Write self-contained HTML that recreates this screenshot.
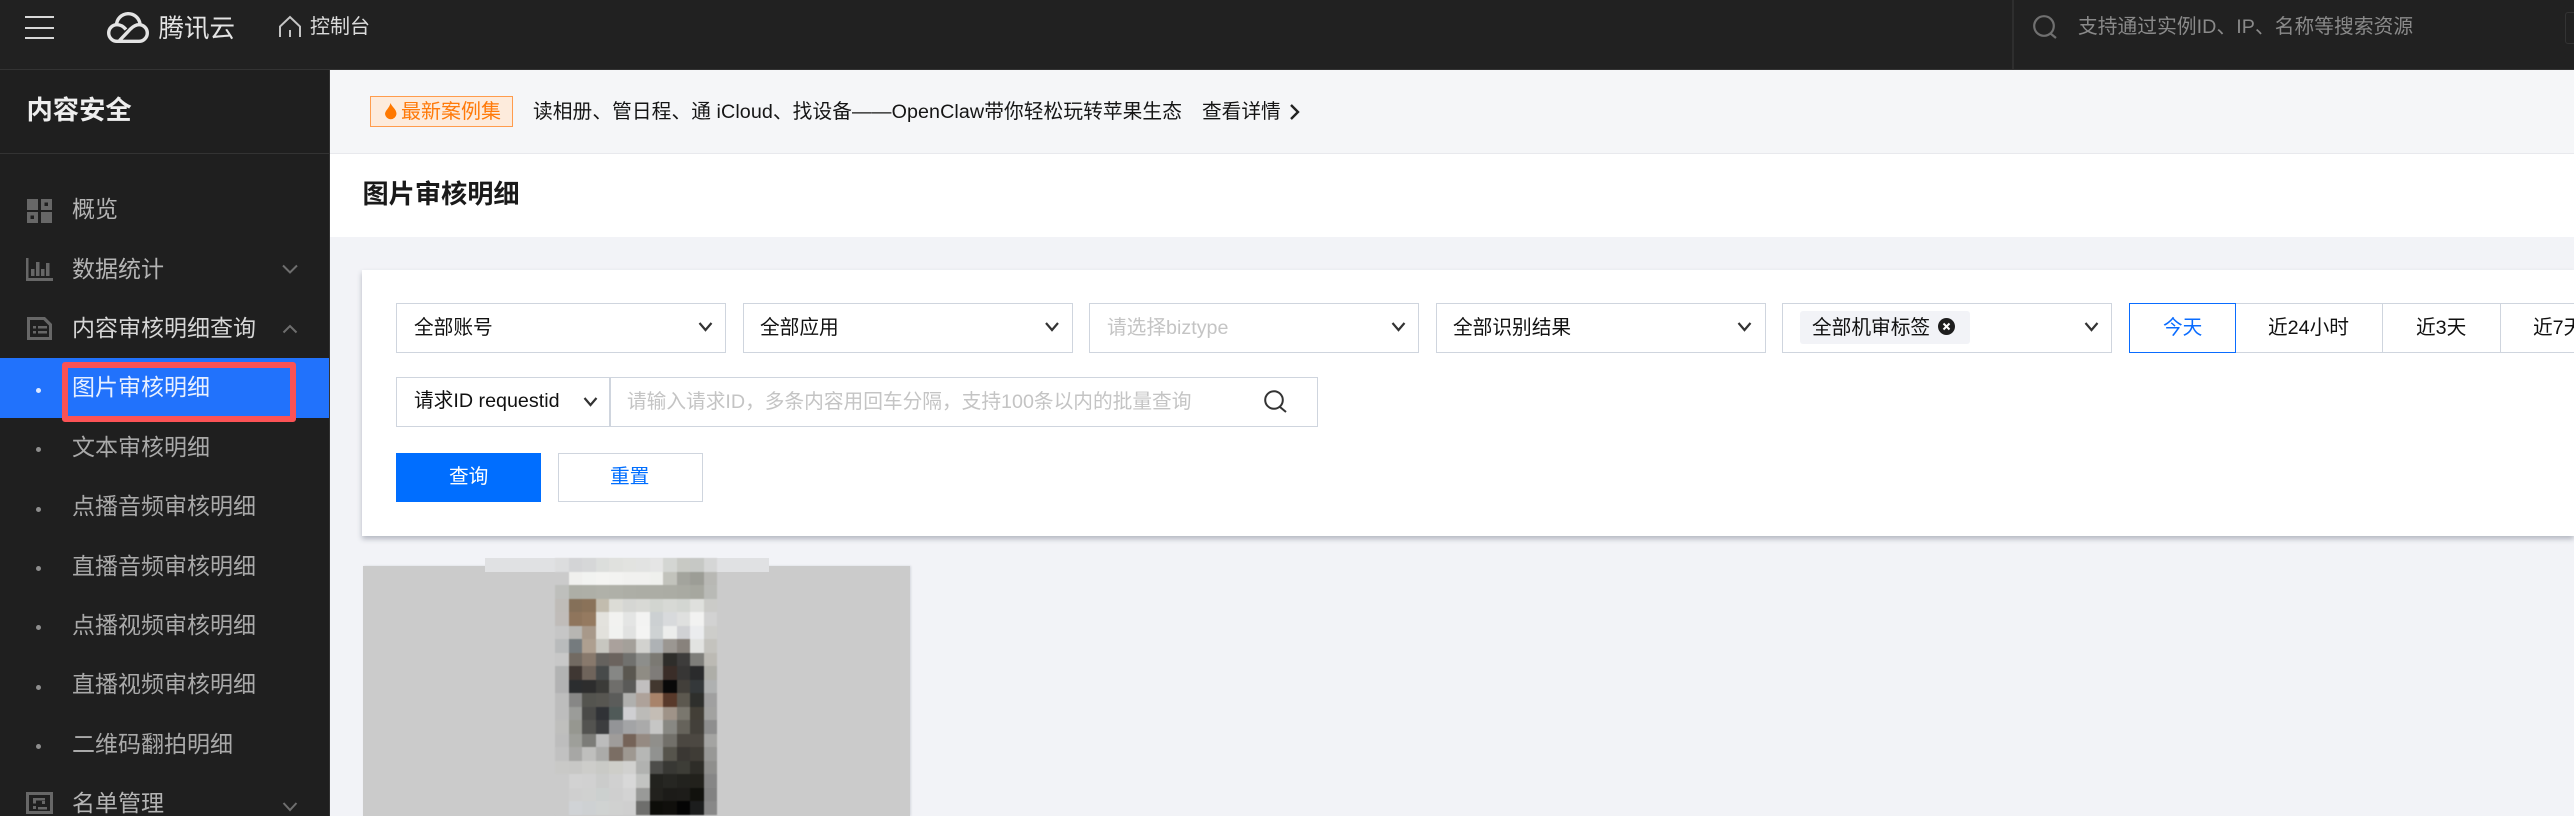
<!DOCTYPE html>
<html lang="zh-CN"><head><meta charset="utf-8"><title>图片审核明细</title>
<style>
html,body{margin:0;padding:0;width:2574px;height:816px;overflow:hidden;background:#f2f3f7}
body{position:relative;font-family:"Liberation Sans","Noto Sans CJK SC",sans-serif;color:#111}
div,span,svg{position:absolute;box-sizing:border-box}
.t{white-space:nowrap;line-height:30px;height:30px;font-size:19.7px}
.m{white-space:nowrap;line-height:30px;height:30px;font-size:23px;color:#a9a9a9;left:72px}
.box{border:1.5px solid #cfd5de;background:#fff}
.dot{left:36px;width:5px;height:5px;border-radius:50%;background:#8e8e8e}
#mos{left:555px;top:558px;width:162px;display:grid;grid-template-columns:repeat(12,13.5px);grid-auto-rows:13.5px;filter:blur(.6px)}
#mos i{display:block}
</style></head><body>

<div style="left:0;top:0;width:2574px;height:70px;background:#212121;border-bottom:1.5px solid #333"></div>
<div style="left:25px;top:16px;width:29px;height:2.4px;background:#d8d8d8"></div>
<div style="left:25px;top:26.5px;width:29px;height:2.4px;background:#d8d8d8"></div>
<div style="left:25px;top:37px;width:29px;height:2.4px;background:#d8d8d8"></div>
<svg style="left:0;top:0" width="320" height="70" fill="none" stroke="#e4e4e4" stroke-width="3.4">
<path d="M117 41.3H139A8.3 8.3 0 0 0 139 24.700C135 24.700 132.500 27 130.500 29L119.500 40.500"/>
<path d="M117 41.3A8.3 8.3 0 0 1 117 24.700C120.500 24.700 123.500 26.500 126 29.500"/>
<path d="M116.500 25A11.800 11.800 0 0 1 140 24"/>
<path d="M280 37V26.500L290 17L300 26.500V37M290 30V37" stroke="#c4c4c4" stroke-width="2"/>
</svg>
<span class="t" style="left:158.500px;top:14px;font-size:25.500px;color:#e4e4e4">腾讯云</span>
<span class="t" style="left:310px;top:12px;font-size:20px;color:#dcdcdc">控制台</span>
<div style="left:2012px;top:0;width:1.5px;height:69px;background:#2e2e2e"></div>
<svg style="left:2030px;top:12px" width="32" height="30" fill="none" stroke="#707070" stroke-width="2.2"><circle cx="14" cy="14" r="9.800"/><path d="M20.500 21.500L26 26"/></svg>
<span class="t" style="left:2078px;top:12px;font-size:19.700px;letter-spacing:.08px;color:#8a8a8a">支持通过实例ID、IP、名称等搜索资源</span>
<div style="left:2565px;top:12px;width:20px;height:32px;border:1.500px solid #333;border-radius:3px"></div>

<div style="left:0;top:70px;width:330px;height:746px;background:#1f1f1f;border-right:1.500px solid #333"></div>
<div style="left:0;top:152.500px;width:329px;height:1.500px;background:#333"></div>
<span class="t" style="left:26.500px;top:95px;font-size:26.300px;font-weight:700;color:#eee">内容安全</span>

<svg style="left:0;top:190px" width="60" height="630" fill="#676767">
<path fill-rule="evenodd" d="M27 9h11v11H27zM41 9h11v11H41zM44.500 12.500v3.500h3.500v-3.500zM27 22h11v11H27zM30.500 25.500v3.500h3.500v-3.500zM41 22h11v11H41z"/>
<path d="M26 68h2.500v20H53v3H26zM31 79h3.500v7H31zM36 72h3.500v14H36zM41 79h3.500v7H41zM46 73h3.500v13H46z"/>
<path fill-rule="evenodd" d="M27 127h18l7 7v16H27zM30 130v17h19v-11.500l-5.500-5.500zM33 136h3v2.500h-3zM38 136h9v2.500h-9zM33 141h3v2.500h-3zM38 141h9v2.500h-9z"/>
<path fill-rule="evenodd" d="M26 602h27v22H26zM29 605v16h21v-16zM33 608h12v2.500H36v3h-3zM42 611h3v3h-3zM33 616h3v3h-3zM38 617h9v2.500h-9z"/>
</svg>
<svg style="left:270px;top:250px" width="40" height="570" fill="none" stroke="#6e6e6e" stroke-width="2">
<path d="M13 15.500L20 22.500L27 15.500"/>
<path d="M13.500 82.500L20 76L26.500 82.500"/>
<path d="M13.500 553L20 560L26.500 553"/>
</svg>

<span class="m" style="top:194px;color:#b4b4b4">概览</span>
<span class="m" style="top:254px;color:#b4b4b4">数据统计</span>
<span class="m" style="top:313px;color:#d6d6d6">内容审核明细查询</span>
<div style="left:0;top:358px;width:329px;height:60px;background:#2172fc"></div>
<div style="left:62px;top:362px;width:234px;height:60px;border:6px solid #fb5255;border-radius:3px"></div>
<span class="m" style="top:372px;color:#e8f0ff">图片审核明细</span>
<span class="m" style="top:432px">文本审核明细</span>
<span class="m" style="top:491px">点播音频审核明细</span>
<span class="m" style="top:551px">直播音频审核明细</span>
<span class="m" style="top:610px">点播视频审核明细</span>
<span class="m" style="top:669px">直播视频审核明细</span>
<span class="m" style="top:729px">二维码翻拍明细</span>
<span class="m" style="top:788px;color:#b4b4b4">名单管理</span>
<div class="dot" style="top:387.500px;background:#dfe9ff"></div>
<div class="dot" style="top:446.500px"></div>
<div class="dot" style="top:506.500px"></div>
<div class="dot" style="top:565.500px"></div>
<div class="dot" style="top:624.500px"></div>
<div class="dot" style="top:684.500px"></div>
<div class="dot" style="top:743.500px"></div>

<div style="left:330px;top:70px;width:2244px;height:84px;background:#f5f6f8;border-bottom:1.500px solid #e8e9ed"></div>
<div style="left:370px;top:96px;width:143px;height:31px;background:#fdebdc;border:1.500px solid #ff9c4d"></div>
<svg style="left:384px;top:102px" width="14" height="20" fill="#ff7800"><path d="M6.500 1C7.500 4.500 12.500 7 12.500 12A5.800 6 0 0 1 1 12C1 8.500 5.500 6 6.500 1Z"/></svg>
<span class="t" style="left:401px;top:97px;font-size:20px;color:#ff7a0a">最新案例集</span>
<span class="t" style="left:533px;top:97px;letter-spacing:.09px;color:#151515">读相册、管日程、通 iCloud、找设备——OpenClaw带你轻松玩转苹果生态</span>
<span class="t" style="left:1202px;top:97px;color:#151515">查看详情</span>
<svg style="left:1288px;top:102px" width="14" height="20" fill="none" stroke="#222" stroke-width="2.400"><path d="M3 3L10 10L3 17"/></svg>

<div style="left:330px;top:154px;width:2244px;height:83px;background:#fff"></div>
<span class="t" style="left:362.500px;top:179px;font-size:26.200px;font-weight:700;color:#1a1a1a">图片审核明细</span>

<div style="left:362px;top:270px;width:2212px;height:266px;background:#fff;box-shadow:0 3px 5px rgba(54,58,80,.32)"></div>

<div class="box" style="left:396px;top:303px;width:330px;height:50px"></div>
<div class="box" style="left:743px;top:303px;width:330px;height:50px"></div>
<div class="box" style="left:1089px;top:303px;width:330px;height:50px"></div>
<div class="box" style="left:1436px;top:303px;width:330px;height:50px"></div>
<div class="box" style="left:1782px;top:303px;width:330px;height:50px"></div>
<span class="t" style="left:414px;top:313px">全部账号</span>
<span class="t" style="left:760px;top:313px">全部应用</span>
<span class="t" style="left:1107px;top:313px;color:#c4c4c4">请选择biztype</span>
<span class="t" style="left:1453px;top:313px">全部识别结果</span>
<div style="left:1800px;top:311px;width:170px;height:33px;background:#f2f3f7;border-radius:3px"></div>
<span class="t" style="left:1812px;top:313px">全部机审标签</span>
<svg style="left:1937px;top:317px" width="20" height="20"><circle cx="9.500" cy="9.500" r="8.500" fill="#1e1e1e"/><path d="M6.500 6.500L12.500 12.500M12.500 6.500L6.500 12.500" stroke="#fff" stroke-width="2"/></svg>

<div class="box" style="left:2235px;top:303px;width:148px;height:50px"></div>
<div class="box" style="left:2382px;top:303px;width:119px;height:50px"></div>
<div class="box" style="left:2500px;top:303px;width:120px;height:50px"></div>
<div style="left:2129px;top:303px;width:107px;height:50px;background:#fff;border:1.500px solid #0a6cff"></div>
<span class="t" style="left:2163px;top:313px;color:#0a6cff">今天</span>
<span class="t" style="left:2268px;top:313px">近24小时</span>
<span class="t" style="left:2416px;top:313px">近3天</span>
<span class="t" style="left:2533px;top:313px">近7天</span>

<div class="box" style="left:396px;top:377px;width:922px;height:50px"></div>
<div style="left:609px;top:377px;width:1.500px;height:50px;background:#cfd5de"></div>
<span class="t" style="left:414px;top:386px">请求ID requestid</span>
<span class="t" style="left:627px;top:387px;color:#c4c4c4">请输入请求ID，多条内容用回车分隔，支持100条以内的批量查询</span>

<svg style="left:0;top:0;z-index:2" width="2200" height="420" fill="none" stroke="#333" stroke-width="2.200">
<path d="M699.500 323L705.500 330L711.500 323"/>
<path d="M1046 323L1052 330L1058 323"/>
<path d="M1392.500 323L1398.500 330L1404.500 323"/>
<path d="M1738.500 323L1744.500 330L1750.500 323"/>
<path d="M2085.500 323L2091.500 330L2097.500 323"/>
<path d="M584.500 398L590.500 405L596.500 398"/>
<circle cx="1274" cy="400" r="8.800" stroke-width="2"/><path d="M1280 407L1286 412" stroke-width="2"/>
</svg>

<div style="left:396px;top:453px;width:145px;height:49px;background:#006eff"></div>
<div class="box" style="left:558px;top:453px;width:145px;height:49px"></div>
<span class="t" style="left:449px;top:462px;color:#fff">查询</span>
<span class="t" style="left:610px;top:462px;color:#006eff">重置</span>

<div style="left:363px;top:566px;width:547px;height:250px;background:#cbcbcb;box-shadow:1px 0 2px rgba(54,58,80,.15)"></div>
<div style="left:485px;top:558px;width:284px;height:14px;background:#e0e1e3"></div>
<div id="mos"><i style="background:#dcddde"></i><i style="background:#d3d4d6"></i><i style="background:#d6d7d8"></i><i style="background:#dcdedc"></i><i style="background:#e0e1de"></i><i style="background:#e2e3e0"></i><i style="background:#e2e3e2"></i><i style="background:#e5e5e5"></i><i style="background:#d4d6d3"></i><i style="background:#c8c9c4"></i><i style="background:#c6c8c5"></i><i style="background:#d5d6d6"></i>
<i style="background:#cbcbcb"></i><i style="background:#f0f0ee"></i><i style="background:#f2f3f1"></i><i style="background:#f4f4f2"></i><i style="background:#f3f3f1"></i><i style="background:#f1f1ef"></i><i style="background:#f1f1ef"></i><i style="background:#eff0ed"></i><i style="background:#c2c3bc"></i><i style="background:#a3a49d"></i><i style="background:#9c9d96"></i><i style="background:#b8b8b4"></i>
<i style="background:#bebfbc"></i><i style="background:#adaea6"></i><i style="background:#aeafa7"></i><i style="background:#b0b1a9"></i><i style="background:#afb0a8"></i><i style="background:#adaea6"></i><i style="background:#acada5"></i><i style="background:#acada5"></i><i style="background:#abaca4"></i><i style="background:#a9aaa2"></i><i style="background:#a6a79f"></i><i style="background:#b9bab6"></i>
<i style="background:#bfbcb8"></i><i style="background:#857059"></i><i style="background:#8a7259"></i><i style="background:#c2bcae"></i><i style="background:#dcdcd6"></i><i style="background:#d5d6d3"></i><i style="background:#d8d9d5"></i><i style="background:#d2d5d0"></i><i style="background:#d7d9d5"></i><i style="background:#d3d6d2"></i><i style="background:#dfe0dd"></i><i style="background:#cbcbc8"></i>
<i style="background:#c0bcb9"></i><i style="background:#8f755c"></i><i style="background:#957a60"></i><i style="background:#e3e2dd"></i><i style="background:#f2f2f0"></i><i style="background:#e4e5e4"></i><i style="background:#f3f3f2"></i><i style="background:#ccd0d2"></i><i style="background:#d8dadc"></i><i style="background:#dfe0df"></i><i style="background:#f2f2f1"></i><i style="background:#d2d2d2"></i>
<i style="background:#c6c6c6"></i><i style="background:#b7b6b2"></i><i style="background:#a8998a"></i><i style="background:#e2e1dc"></i><i style="background:#f1f2f0"></i><i style="background:#e1e2e1"></i><i style="background:#f4f4f3"></i><i style="background:#ced2d3"></i><i style="background:#ecedec"></i><i style="background:#d0d1d4"></i><i style="background:#ebecee"></i><i style="background:#cdcdca"></i>
<i style="background:#b9bbbc"></i><i style="background:#757b7e"></i><i style="background:#ae9f90"></i><i style="background:#c7c6c0"></i><i style="background:#aaa19c"></i><i style="background:#a4a09a"></i><i style="background:#d2d2cf"></i><i style="background:#aeb2b5"></i><i style="background:#9b9792"></i><i style="background:#88827c"></i><i style="background:#e2e3e1"></i><i style="background:#c4c3be"></i>
<i style="background:#c8c8c8"></i><i style="background:#726a62"></i><i style="background:#88796c"></i><i style="background:#65625e"></i><i style="background:#6b635e"></i><i style="background:#71716e"></i><i style="background:#8d8e8b"></i><i style="background:#7b7973"></i><i style="background:#2e2d2a"></i><i style="background:#3d3c3b"></i><i style="background:#7e7e7a"></i><i style="background:#bcbab4"></i>
<i style="background:#b2b3b3"></i><i style="background:#3f3733"></i><i style="background:#6f645b"></i><i style="background:#474a4a"></i><i style="background:#868785"></i><i style="background:#5a5750"></i><i style="background:#8f8c84"></i><i style="background:#7f7c79"></i><i style="background:#3a2d28"></i><i style="background:#373635"></i><i style="background:#2a2b2c"></i><i style="background:#aeaea8"></i>
<i style="background:#b2b2b3"></i><i style="background:#2b2d2f"></i><i style="background:#2d2d2d"></i><i style="background:#3b3b38"></i><i style="background:#6f6e6b"></i><i style="background:#5a5a58"></i><i style="background:#c1bfbf"></i><i style="background:#42372f"></i><i style="background:#090909"></i><i style="background:#423f3a"></i><i style="background:#34383a"></i><i style="background:#afb1b1"></i>
<i style="background:#bdbdbd"></i><i style="background:#878786"></i><i style="background:#54544f"></i><i style="background:#575651"></i><i style="background:#5b5c5a"></i><i style="background:#b0b0ae"></i><i style="background:#aea29a"></i><i style="background:#a8836a"></i><i style="background:#58392a"></i><i style="background:#5c584f"></i><i style="background:#2e2f2c"></i><i style="background:#a0a0a0"></i>
<i style="background:#bdbdbd"></i><i style="background:#9b9c99"></i><i style="background:#4a4a48"></i><i style="background:#303236"></i><i style="background:#505a58"></i><i style="background:#cfcfd2"></i><i style="background:#bcbbb8"></i><i style="background:#c4bdb5"></i><i style="background:#9f9388"></i><i style="background:#7a776e"></i><i style="background:#433f37"></i><i style="background:#a2a2a0"></i>
<i style="background:#bfbfbd"></i><i style="background:#969790"></i><i style="background:#535350"></i><i style="background:#3c3d3f"></i><i style="background:#939497"></i><i style="background:#a3a4a6"></i><i style="background:#aaaaaa"></i><i style="background:#c6c6c5"></i><i style="background:#888883"></i><i style="background:#66635b"></i><i style="background:#43403a"></i><i style="background:#8e8e8e"></i>
<i style="background:#bdbdbd"></i><i style="background:#9e9f9a"></i><i style="background:#7c7c78"></i><i style="background:#bcbcbc"></i><i style="background:#9f9c9a"></i><i style="background:#756358"></i><i style="background:#958a82"></i><i style="background:#908f8b"></i><i style="background:#72706a"></i><i style="background:#4b4741"></i><i style="background:#4c4842"></i><i style="background:#a4a4a2"></i>
<i style="background:#c1c1c1"></i><i style="background:#a7a7a5"></i><i style="background:#bfbfbd"></i><i style="background:#ababa9"></i><i style="background:#7b6e64"></i><i style="background:#9e9891"></i><i style="background:#b6b7b5"></i><i style="background:#919290"></i><i style="background:#56544c"></i><i style="background:#3a3733"></i><i style="background:#3f3c36"></i><i style="background:#989896"></i>
<i style="background:#c9c9c7"></i><i style="background:#c8c8c6"></i><i style="background:#cdcdca"></i><i style="background:#c9cac6"></i><i style="background:#cecec9"></i><i style="background:#d1d1cf"></i><i style="background:#b1b2b0"></i><i style="background:#4d4d4a"></i><i style="background:#383834"></i><i style="background:#3d3d37"></i><i style="background:#2e2d28"></i><i style="background:#8f8f8d"></i>
<i style="background:#cbcbcb"></i><i style="background:#d2d2d2"></i><i style="background:#d1d1d1"></i><i style="background:#cbcccb"></i><i style="background:#d0d0d0"></i><i style="background:#d8d8d8"></i><i style="background:#c2c3c1"></i><i style="background:#22221e"></i><i style="background:#262622"></i><i style="background:#22221e"></i><i style="background:#22211c"></i><i style="background:#868686"></i>
<i style="background:#cbcbcb"></i><i style="background:#cfcfcf"></i><i style="background:#d0d1d0"></i><i style="background:#ccd0cf"></i><i style="background:#cfcfcf"></i><i style="background:#d3d3d3"></i><i style="background:#999a98"></i><i style="background:#22211d"></i><i style="background:#1c1b18"></i><i style="background:#1d1c19"></i><i style="background:#11110d"></i><i style="background:#828282"></i>
<i style="background:#cbcbcb"></i><i style="background:#d0d3d6"></i><i style="background:#ced1d3"></i><i style="background:#d0d3d2"></i><i style="background:#d0d1d0"></i><i style="background:#cfcfcf"></i><i style="background:#6e6e6c"></i><i style="background:#0d0d09"></i><i style="background:#100f0c"></i><i style="background:#040404"></i><i style="background:#1c1d1d"></i><i style="background:#888888"></i>
</div>
</body></html>
